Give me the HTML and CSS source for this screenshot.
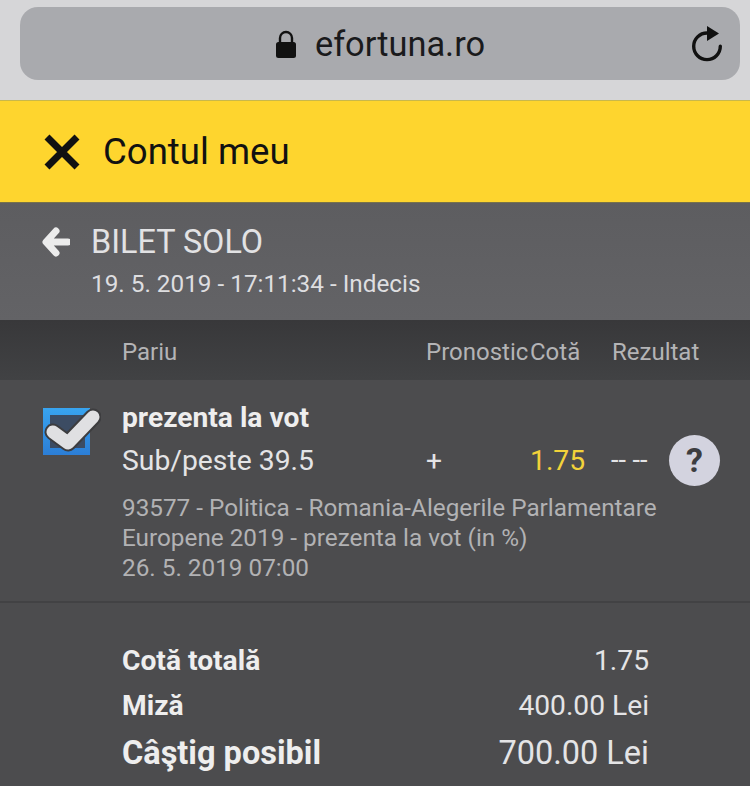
FILE: index.html

```html
<!DOCTYPE html>
<html>
<head>
    <meta charset="utf-8">
    <title>Bilet solo</title>

    <link rel="stylesheet" href="styles.css">
</head>
<body>

<div class="browser-bar">
    <div class="url-bar">
        <div class="url-text">
            <svg class="lock-icon" width="22" height="28" viewBox="0 0 22 28">
                <path d="M5 13V8a6 6 0 0 1 12 0v5" fill="none" stroke="#111" stroke-width="2.4"/>
                <rect x="1" y="12" width="20" height="16" rx="2.5" fill="#111"/>
            </svg>
            <span>efortuna.ro</span>
        </div>
        <svg class="reload-icon" width="32" height="38" viewBox="0 0 32 38">
            <path d="M16 8a13.3 13.3 0 1 0 13.3 13.3" fill="none" stroke="#111" stroke-width="3.4" stroke-linecap="round"/>
            <path d="M16 1l12 7.5-12 7.5z" fill="#111"/>
        </svg>
    </div>
</div>

<header class="account-bar">
    <svg class="close-icon" width="36" height="36" viewBox="0 0 36 36">
        <path d="M3 3l30 30M33 3L3 33" stroke="#111" stroke-width="7"/>
    </svg>
    <span>Contul meu</span>
</header>

<section class="ticket-head">
    <svg class="back-icon" width="28" height="30" viewBox="0 0 28 30">
        <path d="M14 4L4 15l10 11M5 15h21" fill="none" stroke="#ececec" stroke-width="7" stroke-linejoin="round" stroke-linecap="round"/>
    </svg>
    <div class="ticket-title">
        <h1>BILET SOLO</h1>
        <p>19. 5. 2019 - 17:11:34 - Indecis</p>
    </div>
</section>

<div class="table-head">
    <span class="col-bet">Pariu</span>
    <span class="col-tip">Pronostic</span>
    <span class="col-odds">Cotă</span>
    <span class="col-result">Rezultat</span>
</div>

<section class="bet-row">
    <svg class="check-icon" width="58" height="52" viewBox="0 0 58 52">
        <defs>
            <linearGradient id="check-blue" x1="0" y1="0" x2="0" y2="1">
                <stop offset="0" stop-color="#38a4f0"/>
                <stop offset="1" stop-color="#2c7ed6"/>
            </linearGradient>
        </defs>
        <rect x="0" y="2" width="47" height="47" fill="url(#check-blue)"/>
        <rect x="7" y="9" width="35" height="33" fill="#3c4c63"/>
        <path d="M10 26l15 11L50 11" fill="none" stroke="#3d3d3f" stroke-width="17" stroke-linecap="round" stroke-linejoin="round"/>
        <path d="M10 26l15 11L50 11" fill="none" stroke="#e0e0e2" stroke-width="13" stroke-linecap="round" stroke-linejoin="round"/>
    </svg>
    <div class="bet-info">
        <div class="bet-name">prezenta la vot</div>
        <div class="bet-line">
            <span class="bet-type">Sub/peste 39.5</span>
            <span class="bet-tip">+</span>
            <span class="bet-odds">1.75</span>
            <span class="bet-result">-- --</span>
            <span class="help-badge">?</span>
        </div>
        <p class="bet-desc">93577 - Politica - Romania-Alegerile Parlamentare<br>Europene 2019 - prezenta la vot (in %)<br>26. 5. 2019 07:00</p>
    </div>
</section>

<section class="totals">
    <div class="total-row"><b>Cotă totală</b><span>1.75</span></div>
    <div class="total-row"><b>Miză</b><span>400.00 Lei</span></div>
    <div class="total-row total-big"><b>Câştig posibil</b><span>700.00 Lei</span></div>
</section>

</body>
</html>
```

FILE: styles.css

```css
html, body {
    margin: 0;
    padding: 0;
}

body {
    width: 750px;
    height: 786px;
    overflow: hidden;
    background: #4c4c4e;
    font-family: Roboto, "Liberation Sans", sans-serif;
    color: #e4e4e6;
}

/* Browser bar */

.browser-bar {
    box-sizing: border-box;
    height: 101px;
    padding: 7px 10px 0 20px;
    background: #d6d6d8;
    border-bottom: 1px solid #c9b84a;
}

.url-bar {
    display: flex;
    align-items: center;
    justify-content: center;
    position: relative;
    height: 73px;
    border-radius: 18px;
    background: #a9aaae;
}

.url-text {
    display: flex;
    align-items: center;
    gap: 18px;
    font-size: 34.4px;
    color: #1a1a1c;
}

.reload-icon {
    position: absolute;
    right: 17px;
    top: 18px;
}

/* Yellow account bar */

.account-bar {
    display: flex;
    align-items: center;
    gap: 23px;
    box-sizing: border-box;
    height: 101px;
    padding-left: 44px;
    background: #fed52e;
    font-size: 36.6px;
    color: #111;
}

/* Ticket header */

.ticket-head {
    display: flex;
    gap: 21px;
    box-sizing: border-box;
    height: 118px;
    padding: 21px 0 0 42px;
    background: linear-gradient(#5d5d60, #636366);
    border-top: 1px solid #77724a;
}

.back-icon {
    margin-top: 3px;
}

.ticket-title h1 {
    margin: 0;
    font-size: 32.4px;
    font-weight: 400;
    line-height: 36px;
    color: #e2e2e4;
}

.ticket-title p {
    margin: 10px 0 0;
    font-size: 24.3px;
    line-height: 28px;
    color: #dedee0;
}

/* Table head */

.table-head {
    display: flex;
    align-items: center;
    box-sizing: border-box;
    height: 60px;
    padding: 4px 0 0 122px;
    background: linear-gradient(#38383a, #414244);
    font-size: 24px;
    color: #b4b4b6;
}

.col-bet { width: 304px; }
.col-tip { width: 104px; }
.col-odds { width: 82px; }

/* Bet row */

.bet-row {
    display: flex;
    box-sizing: border-box;
    height: 223px;
    padding: 23px 0 0 43px;
    border-bottom: 2px solid #424244;
}

.check-icon {
    flex: none;
    margin-right: 21px;
    margin-top: 3px;
}

.bet-name {
    font-size: 28.2px;
    font-weight: 700;
    line-height: 30px;
    color: #eeeeee;
}

.bet-line {
    display: flex;
    align-items: center;
    height: 50px;
    margin-top: 2px;
    font-size: 28.3px;
}

.bet-type { width: 304px; }
.bet-tip { width: 104px; }
.bet-odds { width: 81px; color: #f2d23a; }
.bet-result { width: 58px; font-size: 27px; }

.help-badge {
    display: flex;
    align-items: center;
    justify-content: center;
    width: 51px;
    height: 51px;
    border-radius: 50%;
    background: #d3d3df;
    font-size: 34px;
    font-weight: 700;
    color: #3d3d3f;
}

.bet-desc {
    margin: 8px 0 0;
    font-size: 24.3px;
    line-height: 30px;
    color: #b2b2b4;
}

/* Totals */

.totals {
    padding: 35px 101px 0 122px;
}

.total-row {
    display: flex;
    justify-content: space-between;
    align-items: center;
    height: 45px;
    font-size: 28.2px;
}

.total-row b {
    color: #eeeeee;
}

.total-big {
    height: 49px;
    font-size: 32.5px;
}
```
